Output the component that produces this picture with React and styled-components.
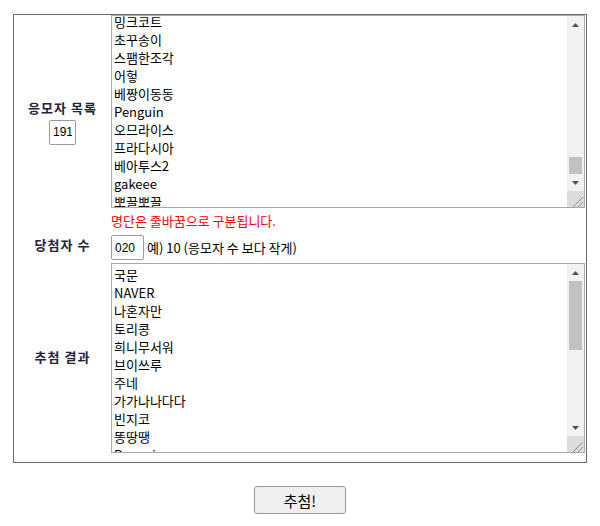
import React, { useEffect, useRef } from 'react'
import styled, { createGlobalStyle } from 'styled-components'

const GlobalStyle = createGlobalStyle`
  body {
    margin: 8px;
    background: #fff;
    font-family: "Noto Sans CJK KR", "Liberation Sans", sans-serif;
    font-size: 13px;
    color: #000;
  }
`;

const Frame = styled.div`
  width: 574px;
  box-sizing: border-box;
  margin: 6px auto 0;
  border: 1px solid #6a6a6a;
  display: grid;
  grid-template-columns: 97px 1fr;
  padding-bottom: 9px;
`;

const Label = styled.div`
  display: flex;
  flex-direction: column;
  align-items: center;
  justify-content: center;
  gap: 4px;
  font-weight: bold;
  letter-spacing: 1px;
  line-height: 16px;
  color: #23233a;
`;

const Field = styled.div`
  display: flex;
  flex-direction: column;
  align-items: flex-start;
  padding-top: ${p => p.$top || 0}px;
`;

const ListBox = styled.div`
  box-sizing: border-box;
  width: 474px;
  height: ${p => p.$height}px;
  display: flex;
  border: 1px solid #a9a9a9;
  background: #fff;
`;

const ListText = styled.textarea`
  flex: 1;
  min-width: 0;
  margin: 0;
  padding: 2px;
  border: 0;
  outline: none;
  resize: none;
  overflow: hidden;
  scrollbar-width: none;
  font-family: "Noto Sans CJK KR", "Liberation Sans", sans-serif;
  font-size: 13px;
  line-height: 18px;
  color: #000;
  background: transparent;
`;

const Rail = styled.div`
  width: 17px;
  display: flex;
  flex-direction: column;
  background: #f1f1f1;
`;

const ArrowButton = styled.div`
  height: 17px;
  flex: none;
  display: flex;
  align-items: center;
  justify-content: center;
`;

const Track = styled.div`
  flex: 1;
  padding: 0 2px;
`;

const Thumb = styled.div`
  height: ${p => p.$size}px;
  margin-top: ${p => p.$offset}px;
  background: #c1c1c1;
`;

const Corner = styled.div`
  height: 16px;
  flex: none;
  background: #dcdcdc;
  display: flex;
  align-items: flex-end;
  justify-content: flex-end;
`;

const Note = styled.div`
  margin-top: 5px;
  line-height: 16px;
  color: #ff0000;
`;

const CountLine = styled.div`
  display: flex;
  align-items: center;
  gap: 3px;
`;

const SmallInput = styled.input`
  box-sizing: border-box;
  width: ${p => p.$width}px;
  height: 25px;
  margin: 0;
  padding: 1px 3px;
  border: 1px solid #9a9a9a;
  border-radius: 2px;
  font-family: "Liberation Sans", sans-serif;
  font-size: 12px;
  font-weight: normal;
  letter-spacing: 0;
  color: #000;
`;

const Actions = styled.div`
  display: flex;
  justify-content: center;
  margin-top: 23px;
`;

const DrawButton = styled.button`
  width: 92px;
  height: 28px;
  border: 1px solid #9a9a9a;
  border-radius: 3px;
  background: #efefef;
  font-family: "Noto Sans CJK KR", "Liberation Sans", sans-serif;
  font-size: 15px;
  color: #000;
`;

const Arrow = ({ down }) =>
  <svg width="7" height="4" viewBox="0 0 7 4">
    <polygon points={down ? '0,0 7,0 3.5,4' : '0,4 7,4 3.5,0'} fill="#505050" />
  </svg>

const Grip = () =>
  <svg width="17" height="16" viewBox="0 0 17 16">
    <line x1="16" y1="6" x2="6" y2="16" stroke="#8c8c8c" strokeWidth="1" />
    <line x1="16" y1="11" x2="11" y2="16" stroke="#8c8c8c" strokeWidth="1" />
  </svg>

const ScrollList = ({ height, value, thumbOffset, thumbSize, textRef }) =>
  <ListBox $height={height}>
    <ListText ref={textRef} defaultValue={value} spellCheck={false} />
    <Rail>
      <ArrowButton><Arrow /></ArrowButton>
      <Track>
        <Thumb $offset={thumbOffset} $size={thumbSize} />
      </Track>
      <ArrowButton><Arrow down /></ArrowButton>
      <Corner><Grip /></Corner>
    </Rail>
  </ListBox>

const syllables = ['하', '늘', '별', '달', '콩', '바', '람', '구', '름', '토', '끼', '사', '과', '나', '무', '민', '트', '초', '코', '레']

const fillers = count =>
  Array.from({ length: count }, (_, i) =>
    syllables[i % 20] + syllables[(i * 7 + 3) % 20] + syllables[(i * 3 + 11) % 20]
  )

const visibleEntries = ['밍크코트', '초꾸송이', '스팸한조각', '어헣', '베짱이동동', 'Penguin', '오므라이스', '프라다시아', '베아투스2', 'gakeee', '뽀끌뽀끌']

const entries = [...fillers(168), ...visibleEntries, ...fillers(12)]

const winners = ['국문', 'NAVER', '나혼자만', '토리콩', '희니무서워', '브이쓰루', '주네', '가가나나다다', '빈지코', '똥땅땡', 'Penguin', '달빛소나타', '초코우유', '하늘별', '구름빵', '사과나무', '민트초코', '토끼발', '바람개비', '콩떡']

const App = () => {
  const listRef = useRef(null)

  useEffect(() => {
    if (listRef.current) listRef.current.scrollTop = 168 * 18 + 5
  }, [])

  return (
    <>
      <GlobalStyle />
      <Frame>
        <Label>
          응모자 목록
          <SmallInput $width={27} defaultValue="191" />
        </Label>
        <Field $top={0}>
          <ScrollList
            height={193}
            value={entries.join('\n')}
            thumbOffset={124}
            thumbSize={17}
            textRef={listRef}
          />
          <Note>명단은 줄바꿈으로 구분됩니다.</Note>
        </Field>

        <Label>당첨자 수</Label>
        <Field $top={6}>
          <CountLine>
            <SmallInput $width={33} defaultValue="020" />
            예) 10 (응모자 수 보다 작게)
          </CountLine>
        </Field>

        <Label>추첨 결과</Label>
        <Field $top={3}>
          <ScrollList
            height={190}
            value={winners.join('\n')}
            thumbOffset={0}
            thumbSize={69}
          />
        </Field>
      </Frame>
      <Actions>
        <DrawButton>추첨!</DrawButton>
      </Actions>
    </>
  )
}

export default App
